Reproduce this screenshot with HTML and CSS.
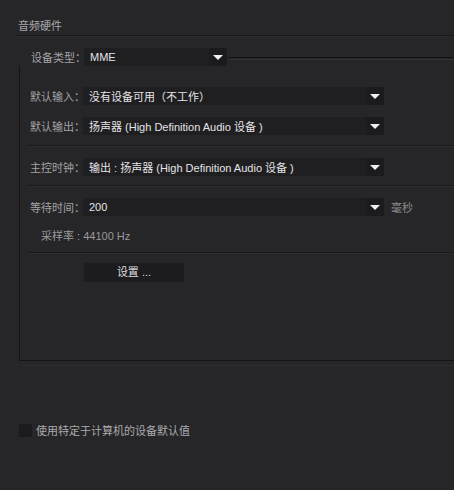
FILE: index.html
```html
<!DOCTYPE html>
<html lang="zh-CN">
<head>
<meta charset="utf-8">
<title>音频硬件</title>
<link rel="stylesheet" href="styles.css">
</head>
<body>
<div class="page">
  <div class="header">音频硬件</div>
  <div class="group">
    <div class="legend">
      <span class="label">设备类型：</span>
      <div class="select select-short"><span class="value">MME</span><span class="arrow"></span></div>
      <div class="topline"></div>
    </div>
    <div class="row row-first">
      <span class="label">默认输入：</span>
      <div class="select"><span class="value">没有设备可用（不工作）</span><span class="arrow"></span></div>
    </div>
    <div class="row">
      <span class="label">默认输出：</span>
      <div class="select"><span class="value">扬声器 (High Definition Audio 设备 )</span><span class="arrow"></span></div>
    </div>
    <div class="sep"></div>
    <div class="row">
      <span class="label">主控时钟：</span>
      <div class="select"><span class="value">输出 : 扬声器 (High Definition Audio 设备 )</span><span class="arrow"></span></div>
    </div>
    <div class="sep sep2"></div>
    <div class="row">
      <span class="label">等待时间：</span>
      <div class="select"><span class="value">200</span><span class="arrow"></span></div>
      <span class="unit">毫秒</span>
    </div>
    <div class="rate">采样率 : 44100 Hz</div>
    <div class="sep sep3"></div>
    <div class="btn-row"><div class="button">设置 ...</div></div>
  </div>
  <div class="faint"></div>
  <div class="check-row">
    <span class="checkbox"></span>
    <span class="check-label">使用特定于计算机的设备默认值</span>
  </div>
</div>
</body>
</html>
```

FILE: styles.css
```css
html, body {
  margin: 0;
  padding: 0;
  background: #262528;
}
body {
  width: 454px;
  height: 490px;
  overflow: hidden;
  font-family: "Liberation Sans", "Noto Sans CJK SC", sans-serif;
  font-size: 11px;
  color: #a3a3a5;
}
.page {
  display: flex;
  flex-direction: column;
}
.header {
  margin-left: 16px;
  padding: 18px 0 1px 2px;
  line-height: 16px;
  color: #a8a8aa;
  border-bottom: 1px solid #18171a;
  box-shadow: 0 1px 0 #2c2b2e;
}
.group {
  margin: 22px 0 0 19px;
  border-left: 1px solid #141316;
  border-bottom: 1px solid #141316;
  height: 302px;
}
.legend {
  display: flex;
  align-items: center;
  height: 18px;
  margin: -10px 0 0 -1px;
  padding-left: 12px;
  background: #262528;
  position: relative;
}
.label {
  width: 53px;
  flex: none;
  color: #a3a3a5;
  white-space: nowrap;
}
.select {
  width: 301px;
  height: 18px;
  flex: none;
  display: flex;
  align-items: center;
  justify-content: space-between;
  background: #1f1e21;
  box-sizing: border-box;
  padding-left: 6px;
}
.select-short {
  width: 143px;
}
.value {
  color: #e4e4e6;
  white-space: nowrap;
}
.arrow {
  width: 18px;
  height: 18px;
  flex: none;
  background: #1b1a1d;
  position: relative;
}
.arrow::after {
  content: "";
  position: absolute;
  left: 4px;
  top: 7px;
  border-left: 5px solid transparent;
  border-right: 5px solid transparent;
  border-top: 5px solid #f0f0f2;
}
.topline {
  flex: 1;
  height: 1px;
  border-top: 1px solid #141316;
  border-bottom: 1px solid #333235;
  margin-left: 1px;
  margin-top: 2px;
}
.row {
  display: flex;
  align-items: center;
  height: 18px;
  padding-left: 10px;
  margin-top: 12px;
}
.row-first {
  margin-top: 21px;
}
.unit {
  margin-left: 7px;
  color: #8c8c8e;
}
.sep {
  margin: 10px 0 0 8px;
  height: 0;
  border-top: 1px solid #19181b;
  border-bottom: 1px solid #2e2d30;
}
.sep + .row {
  margin-top: 11px;
}
.sep2 {
  margin-top: 9px;
}
.rate {
  margin: 13px 0 0 21px;
  line-height: 14px;
  color: #9a9a9c;
}
.sep3 {
  margin-top: 9px;
}
.btn-row {
  display: flex;
  padding-left: 64px;
  margin-top: 9px;
}
.button {
  width: 100px;
  height: 19px;
  line-height: 19px;
  text-align: center;
  background: #1c1b1e;
  color: #dcdcde;
}
.faint {
  margin: 4px 0 0 23px;
  height: 0;
  border-top: 1px solid #2c2b2e;
}
.check-row {
  display: flex;
  align-items: center;
  margin: 56px 0 0 19px;
}
.checkbox {
  width: 13px;
  height: 13px;
  background: #1b1a1d;
  flex: none;
}
.check-label {
  margin-left: 4px;
  color: #ababad;
}
```
